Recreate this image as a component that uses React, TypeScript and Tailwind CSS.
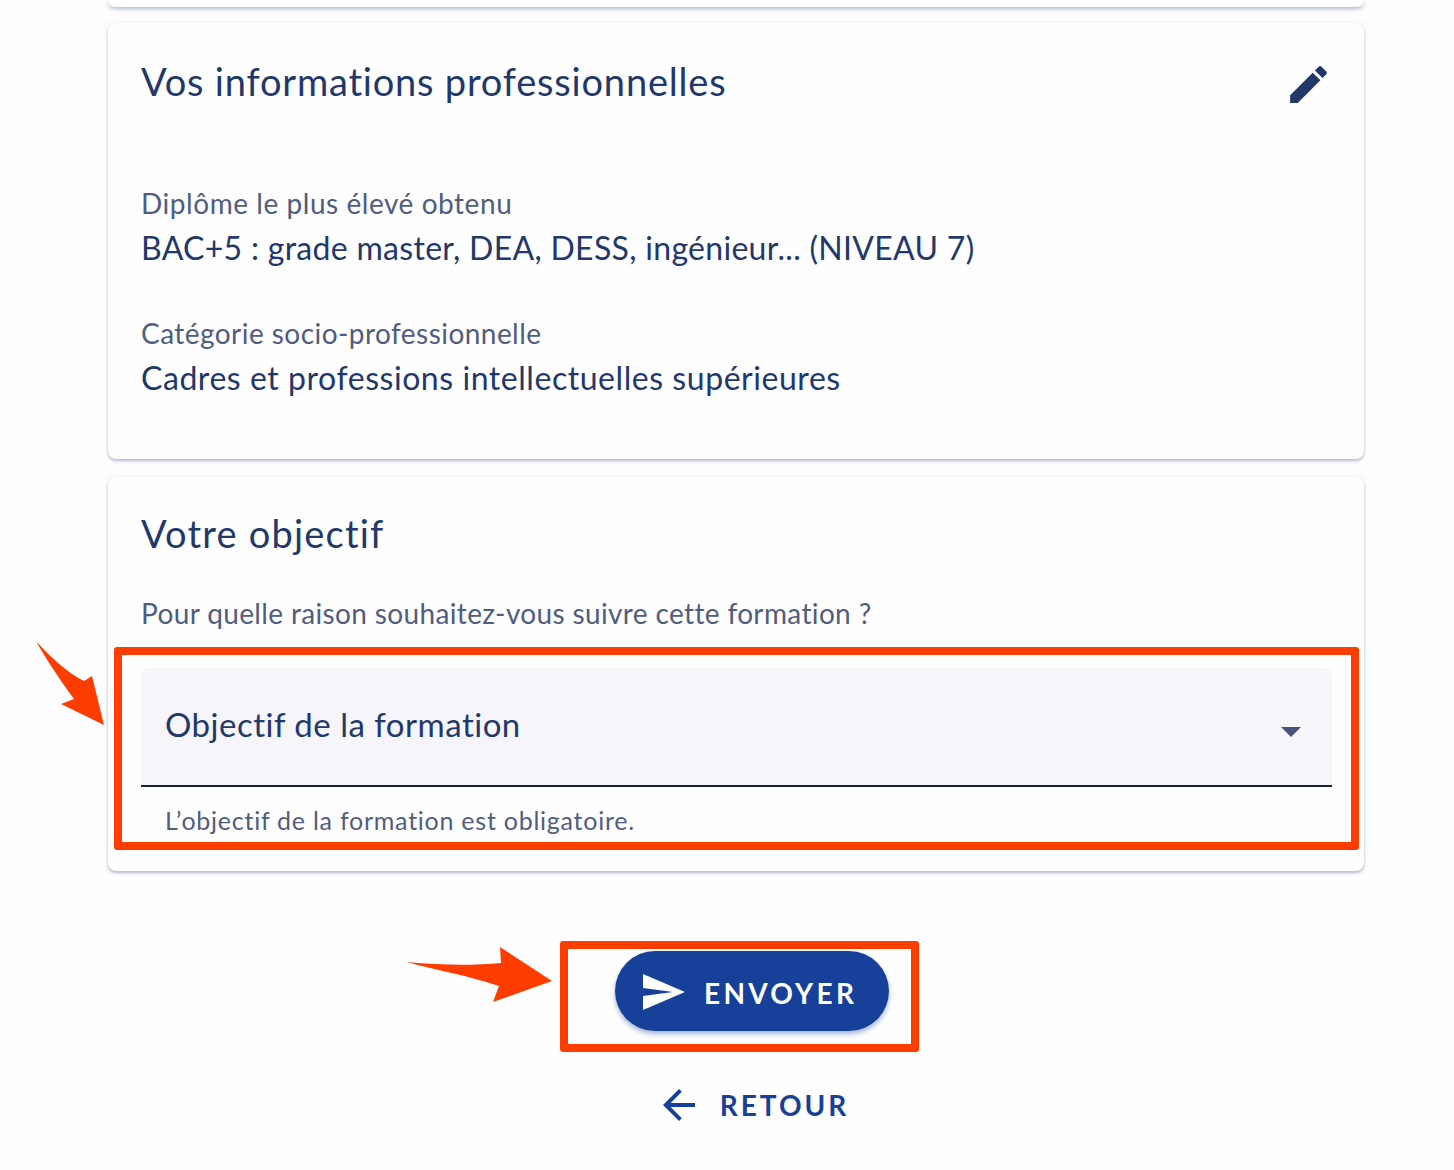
export default function App() {
  return (
    <div className="relative w-[1454px] h-[1170px] overflow-hidden bg-[#fefeff] font-['Lato',sans-serif] text-[#22386b]">
      <div className="flex flex-col pl-[108px] w-[1364px]">
        <div className="h-[7px] bg-white rounded-b-[8px] shadow-[0_2px_4px_rgba(70,80,120,0.4)]" />
        <section className="relative mt-[16px] h-[436px] bg-[#fefeff] rounded-[8px] shadow-[0_2px_3px_rgba(70,80,120,0.35),0_0_6px_rgba(70,80,120,0.08)] px-[33px]">
          <div className="flex justify-between pt-[35px]">
            <h2 className="text-[38px] leading-[46px] font-normal tracking-[0.8px]">Vos informations professionnelles</h2>
            <svg viewBox="0 0 24 24" className="w-[49px] h-[49px] mr-[-2px] mt-[2px]" fill="#22386b">
              <path d="M3 17.25V21h3.75L17.81 9.94l-3.75-3.75L3 17.25zM20.71 7.04c.39-.39.39-1.02 0-1.41l-2.34-2.34c-.39-.39-1.02-.39-1.41 0l-1.83 1.83 3.75 3.75 1.83-1.83z" />
            </svg>
          </div>
          <div className="mt-[75px] text-[28px] leading-[38px] tracking-[0.55px] text-[#505d80]">Diplôme le plus élevé obtenu</div>
          <div className="mt-[6px] text-[32px] leading-[40px] tracking-[0.3px]">BAC+5 : grade master, DEA, DESS, ingénieur... (NIVEAU 7)</div>
          <div className="mt-[46px] text-[28px] leading-[38px] tracking-[0.45px] text-[#505d80]">Catégorie socio-professionnelle</div>
          <div className="mt-[6px] text-[32px] leading-[40px] tracking-[0.55px]">Cadres et professions intellectuelles supérieures</div>
        </section>
        <section className="mt-[18px] h-[394px] bg-[#fefeff] rounded-[8px] shadow-[0_2px_3px_rgba(70,80,120,0.35),0_0_6px_rgba(70,80,120,0.08)] px-[33px]">
          <h2 className="pt-[33px] text-[38px] leading-[46px] font-normal tracking-[1.2px]">Votre objectif</h2>
          <div className="mt-[37px] text-[28px] leading-[40px] tracking-[0.36px] text-[#505d80]">Pour quelle raison souhaitez-vous suivre cette formation ?</div>
          <div className="mt-[35px] mr-[-1px] h-[119px] flex items-center justify-between pl-[24px] pr-[31px] bg-[#f5f5fa] rounded-t-[8px] border-b-2 border-[#17223f]">
            <span className="mb-[6px] text-[33px] leading-[40px] tracking-[0.5px]">Objectif de la formation</span>
            <span className="mt-[10px] w-0 h-0 border-x-[10px] border-x-transparent border-t-[10px] border-t-[#46527a]" />
          </div>
          <div className="mt-[15px] pl-[24px] text-[25px] leading-[36px] tracking-[0.75px] text-[#505d80]">L’objectif de la formation est obligatoire.</div>
        </section>
        <div className="flex flex-col items-center mt-[80px] w-[1256px]">
          <button className="ml-[32px] w-[274px] h-[80px] flex items-center pl-[24px] bg-[#174098] text-white rounded-full shadow-[0_3px_5px_rgba(23,64,152,0.4)]">
            <svg viewBox="0 0 24 24" className="w-[48px] h-[48px] mt-[2px] shrink-0" fill="#ffffff">
              <path d="M2.01 21L23 12 2.01 3 2 10l15 2-15 2z" />
            </svg>
            <span className="ml-[17px] mt-[4px] text-[28px] leading-[36px] font-bold tracking-[3.3px]">ENVOYER</span>
          </button>
          <button className="ml-[32px] mt-[50px] flex items-center text-[#174098]">
            <svg viewBox="0 0 24 24" className="w-[48px] h-[48px] shrink-0" fill="#174098">
              <path d="M20 11H7.83l5.59-5.59L12 4l-8 8 8 8 1.41-1.41L7.83 13H20v-2z" />
            </svg>
            <span className="ml-[17px] text-[28px] leading-[36px] font-bold tracking-[3px]">RETOUR</span>
          </button>
        </div>
      </div>

      <div className="absolute left-[114px] top-[647px] w-[1245px] h-[203px] border-[8px] border-[#ff3d00] rounded-[3px]" />
      <div className="absolute left-[560px] top-[941px] w-[359px] h-[111px] border-[8px] border-[#ff3d00] rounded-[3px]" />

      <svg className="absolute left-[30px] top-[635px] w-[80px] h-[95px]" viewBox="0 0 80 95" fill="#ff3d00">
        <path d="M6 6 C20 22 38 38 54 46 L62 41 L74 90 L31 69 L44 64 C28 42 16 24 6 6Z" />
      </svg>
      <svg className="absolute left-[400px] top-[940px] w-[160px] h-[70px]" viewBox="0 0 160 70" fill="#ff3d00">
        <path d="M7 22 C40 25 70 26 101 23 L100 7 L152 41 L93 62 L99 46 C70 36 35 30 7 22Z" />
      </svg>
    </div>
  );
}
